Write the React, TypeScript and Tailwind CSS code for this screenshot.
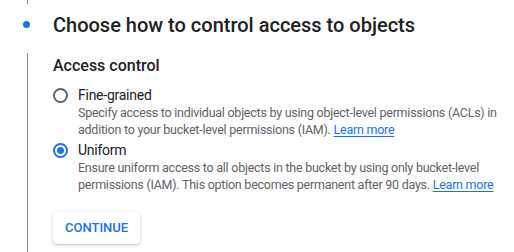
import React from 'react';

const font = { fontFamily: 'Roboto, "Liberation Sans", sans-serif' };

function Radio({ checked }: { checked: boolean }) {
    return (
        <span
            className={
                checked
                    ? 'flex h-[15px] w-[15px] shrink-0 items-center justify-center rounded-full border-2 border-[#1a73e8]'
                    : 'flex h-[15px] w-[15px] shrink-0 items-center justify-center rounded-full border-2 border-[#5f6368]'
            }
        >
            {checked && <span className="h-[7px] w-[7px] rounded-full bg-[#1a73e8]" />}
        </span>
    );
}

function Option({
    checked,
    label,
    children,
}: React.PropsWithChildren<{ checked: boolean; label: string }>) {
    return (
        <div className="flex gap-[10px]">
            <div className="flex h-[18px] items-center">
                <Radio checked={checked} />
            </div>
            <div className="flex flex-col">
                <span className="text-[14px] leading-[18px] tracking-[-0.25px] text-[#202124]">{label}</span>
                <p className="text-[12.5px] leading-[17px] tracking-[-0.25px] text-[#5f6368]">{children}</p>
            </div>
        </div>
    );
}

function LearnMore() {
    return (
        <a href="#" className="text-[#1a73e8] underline decoration-[#1a73e8] underline-offset-2">
            Learn more
        </a>
    );
}

export default function App() {
    return (
        <div className="h-[252px] w-[514px] overflow-hidden bg-white" style={font}>
            {/* Step header */}
            <div className="ml-[27px] h-[4px] w-px bg-[#80868b]" />
            <div className="flex h-[49px] items-center pb-[8px]">
                <div className="flex w-[53px] justify-center">
                    <span className="h-[7px] w-[7px] rounded-full bg-[#1a73e8]" />
                </div>
                <h1 className="text-[20px] font-medium text-[#202124]">Choose how to control access to objects</h1>
            </div>

            {/* Step body */}
            <div className="ml-[27px] flex border-l border-[#80868b] pl-[25px] pt-[2px]">
                <div className="flex w-[450px] flex-col">
                    <h2 className="text-[16px] font-medium leading-[22px] text-[#202124]">Access control</h2>
                    <div className="mt-[9px] flex flex-col gap-[3px]">
                        <Option checked={false} label="Fine-grained">
                            Specify access to individual objects by using object-level permissions (ACLs) in addition to your bucket-level permissions (IAM). <LearnMore />
                        </Option>
                        <Option checked={true} label="Uniform">
                            Ensure uniform access to all objects in the bucket by using only bucket-level permissions (IAM). This option becomes permanent after 90 days. <LearnMore />
                        </Option>
                    </div>
                    <div className="mt-[19px] pb-[10px]">
                        <button className="h-[32px] rounded-[4px] bg-white px-[12px] text-[13px] font-medium text-[#1a73e8] shadow-[0_1px_3px_rgba(60,64,67,0.35)]">
                            CONTINUE
                        </button>
                    </div>
                </div>
            </div>
        </div>
    );
}
